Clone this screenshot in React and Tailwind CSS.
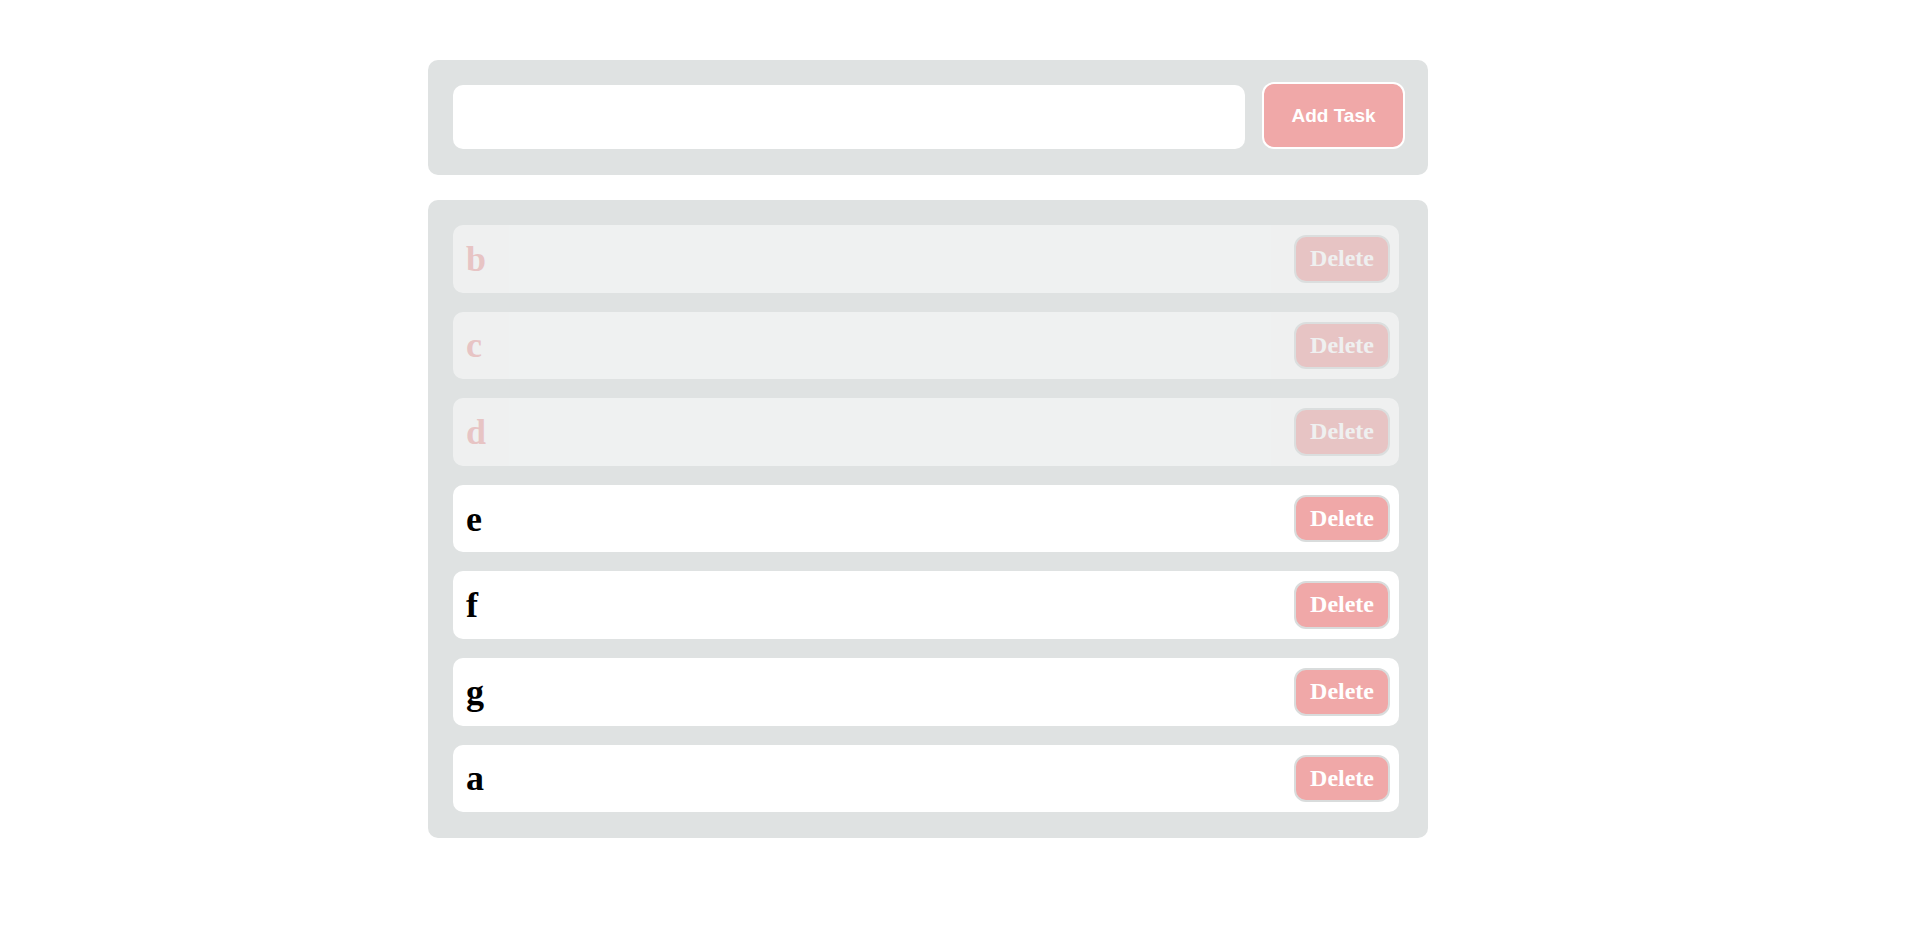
import React from "react";

const tasks = [
  { text: "b", done: true },
  { text: "c", done: true },
  { text: "d", done: true },
  { text: "e", done: false },
  { text: "f", done: false },
  { text: "g", done: false },
  { text: "a", done: false },
];

export default function App() {
  return (
    <div className="min-h-[927px] w-full bg-white pt-[60px]">
      <div className="ml-[428px] w-[1000px]">
        <div className="flex items-end gap-[17px] rounded-[10px] bg-[#dfe2e2] pl-[25px] pr-[23px] pt-[22px] pb-[26px]">
          <input
            type="text"
            className="h-[64px] w-[792px] rounded-[10px] border-0 bg-white px-3 outline-none"
          />
          <button
            className="h-[67px] w-[143px] rounded-[12px] border-2 border-white bg-[#f0a8a8] text-[19px] font-bold leading-[1.15] text-white"
            style={{ fontFamily: '"Liberation Sans", Arial, sans-serif' }}
          >
            Add Task
          </button>
        </div>

        <div className="mt-[25px] flex flex-col gap-[19px] rounded-[10px] bg-[#dfe2e2] pl-[25px] pr-[29px] pt-[25px] pb-[26px]">
          {tasks.map((t) => (
            <div
              key={t.text}
              className={
                "flex items-center justify-between rounded-[10px] bg-white py-[10px] pl-[13px] pr-[9px] " +
                (t.done ? "opacity-50" : "")
              }
              style={{ fontFamily: '"Liberation Serif", "Times New Roman", serif' }}
            >
              <span
                className={
                  "text-[36px] font-bold leading-none " +
                  (t.done ? "text-[#f0a8a8]" : "text-black")
                }
              >
                {t.text}
              </span>
              <button className="rounded-[12px] border-2 border-[#d9dcdc] bg-[#f0a8a8] px-[14px] py-[8px] text-[24px] font-bold leading-[1.15] text-white">
                Delete
              </button>
            </div>
          ))}
        </div>
      </div>
    </div>
  );
}
